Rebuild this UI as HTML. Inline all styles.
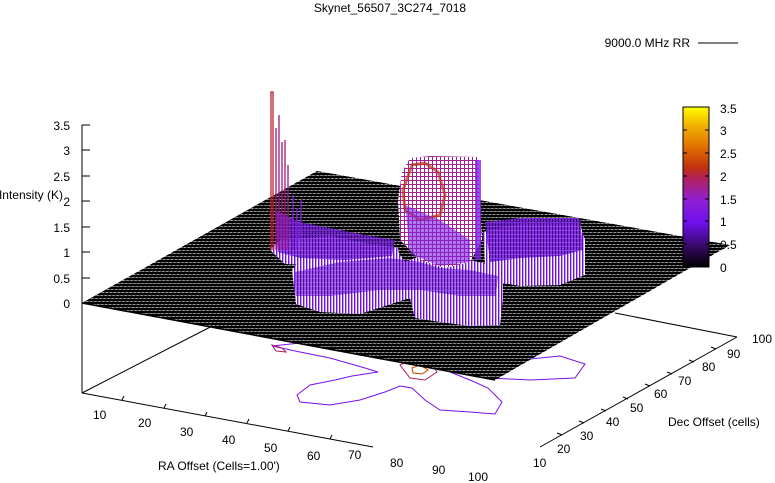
<!DOCTYPE html>
<html><head><meta charset="utf-8"><style>
html,body{margin:0;padding:0;background:#fff;width:775px;height:483px;overflow:hidden}
svg{display:block}
text{font-family:"Liberation Sans",sans-serif;font-size:12px;fill:#000}
</style></head><body>
<svg width="775" height="483" viewBox="0 0 775 483" xmlns="http://www.w3.org/2000/svg">
<defs>
<pattern id="mesh" width="4" height="3" patternUnits="userSpaceOnUse" patternTransform="skewX(-60)">
<rect width="4" height="3" fill="#000"/><rect x="0" y="1" width="3" height="1" fill="#fff"/>
</pattern>
<pattern id="vp" width="3" height="10" patternUnits="userSpaceOnUse">
<rect width="3" height="10" fill="#fff"/><rect width="1.4" height="10" fill="#7010e0"/>
</pattern>
<pattern id="vp2" width="3" height="4" patternUnits="userSpaceOnUse">
<rect width="3" height="4" fill="#7a20e0"/><rect width="1" height="4" fill="#2a0860"/><rect y="2" width="3" height="1" fill="#9030f0"/>
</pattern>
<pattern id="vr" width="4" height="4" patternUnits="userSpaceOnUse">
<rect width="4" height="4" fill="#fff"/><rect width="1" height="4" fill="#9020b0"/><rect y="0" width="4" height="1" fill="#a02090"/>
</pattern>
<linearGradient id="cb" x1="0" y1="1" x2="0" y2="0">
<stop offset="0" stop-color="#000"/>
<stop offset="0.14" stop-color="#3a0a70"/>
<stop offset="0.28" stop-color="#7010f0"/>
<stop offset="0.42" stop-color="#9020d0"/>
<stop offset="0.55" stop-color="#b02060"/>
<stop offset="0.62" stop-color="#c03010"/>
<stop offset="0.75" stop-color="#e07000"/>
<stop offset="0.88" stop-color="#f0b000"/>
<stop offset="1" stop-color="#ffff00"/>
</linearGradient>
</defs>

<text x="390" y="12" text-anchor="middle">Skynet_56507_3C274_7018</text>
<text x="690" y="47" text-anchor="end">9000.0 MHz RR</text>
<line x1="698" y1="43" x2="738" y2="43" stroke="#000"/>

<g stroke="#000" stroke-width="1" fill="none">
<line x1="82" y1="125" x2="82" y2="393"/>
<line x1="82" y1="393" x2="373" y2="447"/>
<line x1="540" y1="447" x2="737" y2="337"/>
<line x1="737" y1="337" x2="615" y2="313"/>
<line x1="82" y1="393" x2="220" y2="322"/>
</g>
<g stroke="#000">
<line x1="82" y1="125" x2="90" y2="125"/><line x1="82" y1="150" x2="90" y2="150"/><line x1="82" y1="176" x2="90" y2="176"/><line x1="82" y1="201" x2="90" y2="201"/><line x1="82" y1="227" x2="90" y2="227"/><line x1="82" y1="252" x2="90" y2="252"/><line x1="82" y1="278" x2="90" y2="278"/><line x1="82" y1="303" x2="90" y2="303"/>
<line x1="122" y1="400" x2="124" y2="396"/><line x1="164" y1="408" x2="166" y2="404"/><line x1="205" y1="416" x2="207" y2="412"/><line x1="247" y1="423" x2="249" y2="419"/><line x1="288" y1="431" x2="290" y2="427"/><line x1="330" y1="439" x2="332" y2="435"/>
<line x1="562" y1="435" x2="557" y2="433"/><line x1="584" y1="423" x2="579" y2="421"/><line x1="606" y1="411" x2="601" y2="409"/><line x1="628" y1="399" x2="623" y2="397"/><line x1="650" y1="386" x2="645" y2="384"/><line x1="672" y1="374" x2="667" y2="372"/><line x1="694" y1="362" x2="689" y2="360"/><line x1="716" y1="349" x2="711" y2="347"/>
</g>
<g text-anchor="end">
<text x="70" y="130">3.5</text><text x="70" y="155">3</text><text x="70" y="181">2.5</text><text x="70" y="206">2</text><text x="70" y="232">1.5</text><text x="70" y="257">1</text><text x="70" y="283">0.5</text><text x="70" y="308">0</text>
</g>
<text x="63" y="199" text-anchor="end">Intensity (K)</text>
<g>
<text x="93" y="419">10</text><text x="138" y="427">20</text><text x="180" y="436">30</text><text x="222" y="444">40</text><text x="264" y="452">50</text><text x="307" y="460">60</text><text x="348" y="459">70</text><text x="390" y="467">80</text><text x="432" y="474">90</text><text x="468" y="481">100</text>
<text x="158" y="470">RA Offset (Cells=1.00')</text>
<text x="533" y="467">10</text><text x="557" y="453">20</text><text x="580" y="440">30</text><text x="606" y="426">40</text><text x="630" y="412">50</text><text x="654" y="398">60</text><text x="678" y="385">70</text><text x="702" y="371">80</text><text x="727" y="358">90</text><text x="752" y="343">100</text>
<text x="668" y="426">Dec Offset (cells)</text>
</g>

<g fill="none" stroke="#7a10e8" stroke-width="1">
<path d="M272,346 L300,352 L330,358 L365,368 L378,372 L352,376 L335,380 L310,385 L297,395 L300,402 L330,405 L360,400 L385,392 L400,386 L412,388 L425,400 L440,410 L470,412 L495,414 L502,402 L488,388 L470,380 L450,372 L440,366 L430,362 L420,360 L398,356 L378,352 L340,346 L300,343 Z"/>
<path d="M455,368 L480,370 L520,360 L560,356 L585,364 L575,378 L530,380 L490,378"/>
<path d="M405,356 L420,335 L410,320"/>
<path d="M455,360 L470,345 L478,330"/>
</g>
<path d="M400,365 L410,360 L430,362 L437,372 L425,380 L410,378 Z" fill="none" stroke="#b02060"/>
<path d="M412,368 L420,365 L428,370 L422,374 L413,373 Z" fill="none" stroke="#d04000"/>
<path d="M272,345 L282,348 L286,352 L276,351 Z" fill="none" stroke="#b02060"/>

<polygon points="82,303 317,171 730,245 495,380" fill="url(#mesh)"/>
<polygon points="82,303 317,171 730,245 495,380" fill="#000" opacity="0.4"/>
<line x1="82" y1="303" x2="495" y2="380" stroke="#000" stroke-width="1.5"/>

<path d="M270,250 L280,240 L330,236 L370,244 L398,248 L400,262 L390,266 L330,266 L285,264 Z" fill="url(#vp)"/>
<path d="M292,270 L300,260 L340,256 L398,252 L405,262 L420,256 L470,260 L503,268 L503,300 L500,325 L470,326 L440,322 L415,318 L410,298 L385,306 L360,314 L320,312 L296,304 Z" fill="url(#vp)"/>
<path d="M483,232 L520,224 L580,224 L585,240 L585,275 L560,285 L520,286 L486,280 Z" fill="url(#vp)"/>
<path d="M485,222 L520,218 L580,218 L583,250 L560,256 L520,258 L490,262 Z" fill="url(#vp2)" opacity="0.9"/>
<path d="M275,210 L300,222 L330,228 L370,236 L395,240 L392,256 L345,260 L300,258 L278,252 Z" fill="url(#vp2)" opacity="0.85"/>
<path d="M295,272 L340,262 L390,258 L420,262 L440,268 L470,270 L498,276 L496,296 L460,296 L420,290 L380,290 L330,296 L296,296 Z" fill="url(#vp2)" opacity="0.7"/>
<path d="M402,172 L410,158 L430,156 L478,157 L480,200 L482,240 L470,262 L445,268 L420,260 L400,240 L398,200 Z" fill="url(#vr)"/>
<path d="M403,190 L412,165 L425,163 L438,172 L445,195 L440,215 L420,220 L405,210 Z" fill="none" stroke="#c03010" stroke-width="3" opacity="0.7"/>
<path d="M405,205 L440,220 L470,240 L470,262 L440,266 L410,254 Z" fill="#8020e0" opacity="0.6"/>
<rect x="475" y="160" width="6" height="100" fill="#8020f0" opacity="0.8"/>
<g stroke-width="1.3" fill="none">
<path d="M271,250 L271,92 L273,92 L273,250" stroke="#c02030"/>
<path d="M276,250 L276,128 M279,250 L279,115 M282,250 L282,142 M285,250 L285,140 M288,250 L288,165" stroke="#a01880"/>
<path d="M293,250 L293,195 M297,250 L297,208 M301,250 L301,200" stroke="#8020e0"/>
</g>

<rect x="683" y="107" width="26" height="160" fill="url(#cb)" stroke="#000"/>
<g stroke="#000">
<line x1="683" y1="130" x2="687" y2="130"/><line x1="705" y1="130" x2="709" y2="130"/>
<line x1="683" y1="153" x2="687" y2="153"/><line x1="705" y1="153" x2="709" y2="153"/>
<line x1="683" y1="176" x2="687" y2="176"/><line x1="705" y1="176" x2="709" y2="176"/>
<line x1="683" y1="199" x2="687" y2="199"/><line x1="705" y1="199" x2="709" y2="199"/>
<line x1="683" y1="221" x2="687" y2="221"/><line x1="705" y1="221" x2="709" y2="221"/>
<line x1="683" y1="244" x2="687" y2="244"/><line x1="705" y1="244" x2="709" y2="244"/>
</g>
<g>
<text x="720" y="113">3.5</text><text x="720" y="135">3</text><text x="720" y="158">2.5</text><text x="720" y="181">2</text><text x="720" y="204">1.5</text><text x="720" y="226">1</text><text x="720" y="249">0.5</text><text x="720" y="272">0</text>
</g>
</svg>
</body></html>
